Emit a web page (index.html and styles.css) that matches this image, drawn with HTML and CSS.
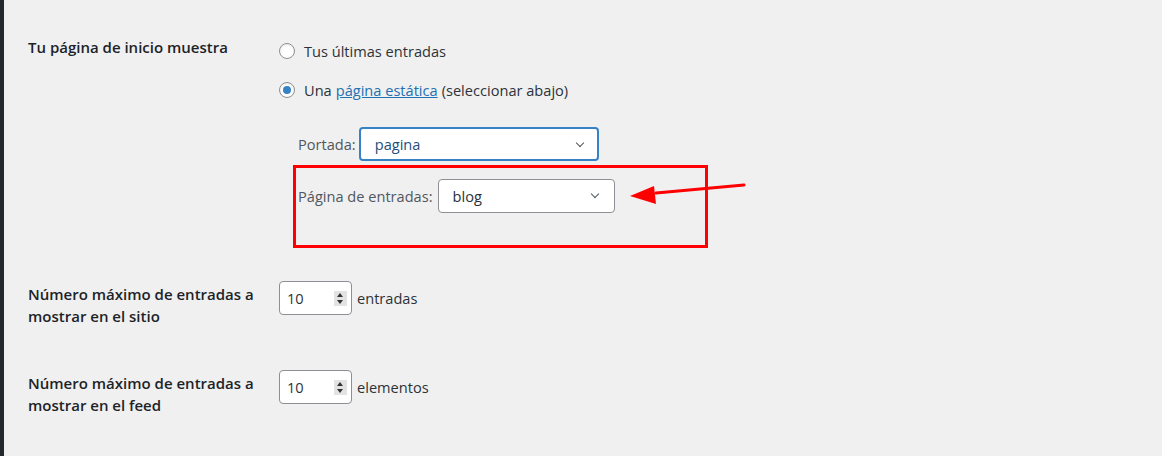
FILE: index.html
```html
<!DOCTYPE html>
<html lang="es">
<head>
	<meta charset="UTF-8">
	<title>Ajustes de lectura</title>
	<link rel="stylesheet" href="styles.css">
</head>
<body>
<div id="page">
	<div id="sidebar"></div>
	<div id="settings">
		<div class="row row-front">
			<div class="th">Tu página de inicio muestra</div>
			<div class="td">
				<label class="choice"><span class="radio"></span>Tus últimas entradas</label>
				<label class="choice"><span class="radio checked"></span>Una <a href="javascript:">página estática</a> (seleccionar abajo)</label>
				<div class="pick pick-front">
					<span>Portada:</span>
					<div class="select focus select-front">pagina<span class="chev"></span></div>
				</div>
				<div class="mark">
					<div class="pick pick-posts">
						<span>Página de entradas:</span>
						<div class="select select-posts">blog<span class="chev"></span></div>
					</div>
					<svg class="arrow" width="130" height="30" viewBox="0 0 130 30">
						<line x1="118" y1="8" x2="30" y2="16" stroke="#f00" stroke-width="3" stroke-linecap="round"/>
						<polygon points="4,19 28,9 30,27" fill="#f00"/>
					</svg>
				</div>
			</div>
		</div>

		<div class="row row-num">
			<div class="th">Número máximo de entradas a mostrar en el sitio</div>
			<div class="td">
				<div class="num">10<span class="spin"><i class="up"></i><i class="down"></i></span></div>
				<span class="unit">entradas</span>
			</div>
		</div>

		<div class="row row-num">
			<div class="th">Número máximo de entradas a mostrar en el feed</div>
			<div class="td">
				<div class="num">10<span class="spin"><i class="up"></i><i class="down"></i></span></div>
				<span class="unit">elementos</span>
			</div>
		</div>
	</div>
</div>
</body>
</html>
```

FILE: styles.css
```css
html, body {
	margin: 0;
	padding: 0;
	background: #f0f0f1;
	font-family: 'Open Sans', 'Noto Sans', sans-serif;
	font-size: 14.6px;
	color: #1d2327;
}
#page {
	display: flex;
	height: 456px;
	overflow: hidden;
}
#sidebar {
	width: 4px;
	background: #23282d;
	flex: none;
}
#settings {
	padding: 36px 0 0 24px;
}
.row {
	display: flex;
}
.th {
	width: 232px;
	padding-right: 19px;
	font-weight: 600;
	font-size: 15px;
	line-height: 22px;
	color: #1d2327;
}
.td {
	display: flex;
	flex-direction: column;
	padding-top: 5px;
}
.choice {
	display: flex;
	align-items: center;
	height: 20px;
	margin-bottom: 19px;
	color: #2c3338;
}
.choice a {
	color: #2271b1;
	margin: 0 4px;
}
.radio {
	width: 14px;
	height: 14px;
	border: 1px solid #8c8f94;
	border-radius: 50%;
	background: #fff;
	margin-right: 9px;
	position: relative;
	box-shadow: inset 0 1px 2px rgba(0,0,0,.1);
}
.radio.checked::after {
	content: '';
	position: absolute;
	left: 3px;
	top: 3px;
	width: 8px;
	height: 8px;
	border-radius: 50%;
	background: #3582c4;
}
.pick {
	display: flex;
	align-items: center;
	color: #50575e;
}
.pick-front {
	margin-left: 19px;
	margin-top: 8px;
}
.pick-front span:first-child {
	margin-right: 3px;
}
.select {
	box-sizing: border-box;
	height: 34px;
	border: 1px solid #8c8f94;
	border-radius: 4px;
	background: #fff;
	display: flex;
	align-items: center;
	padding-left: 14px;
	color: #2c3338;
	position: relative;
}
.select.focus {
	border: 2px solid #3582c4;
	padding-left: 14px;
	color: #1e4f7c;
}
.select-front {
	width: 240px;
}
.select-posts {
	width: 177px;
}
.chev {
	position: absolute;
	right: 11px;
	top: 11px;
	width: 5px;
	height: 5px;
	border-right: 1.6px solid #50575e;
	border-bottom: 1.6px solid #50575e;
	transform: rotate(45deg);
}
.mark {
	position: relative;
	margin: 4px 0 0 14px;
	width: 409px;
	height: 77px;
	border: 3px solid #f00;
}
.pick-posts {
	margin: 11px 0 0 2px;
}
.pick-posts span:first-child {
	margin-right: 5px;
}
.arrow {
	position: absolute;
	left: 330px;
	top: 9px;
}
.row-front + .row-num {
	margin-top: 35px;
}
.row-num + .row-num {
	margin-top: 45px;
}
.row-num .td {
	flex-direction: row;
	align-items: center;
	align-self: flex-start;
	padding-top: 0;
	margin-top: -2px;
}
.num {
	box-sizing: border-box;
	width: 73px;
	height: 34px;
	border: 1px solid #8c8f94;
	border-radius: 4px;
	background: #fff;
	display: flex;
	align-items: center;
	padding-left: 7px;
	color: #2c3338;
	position: relative;
}
.spin {
	position: absolute;
	right: 4px;
	top: 9px;
	width: 13px;
	height: 15px;
	background: #e3e3e3;
}
.spin i {
	position: absolute;
	left: 3px;
	width: 0;
	height: 0;
	border-left: 3.5px solid transparent;
	border-right: 3.5px solid transparent;
}
.spin .up {
	top: 2px;
	border-bottom: 4px solid #333;
}
.spin .down {
	bottom: 2px;
	border-top: 4px solid #333;
}
.unit {
	margin-left: 5px;
	color: #2c3338;
}
```
